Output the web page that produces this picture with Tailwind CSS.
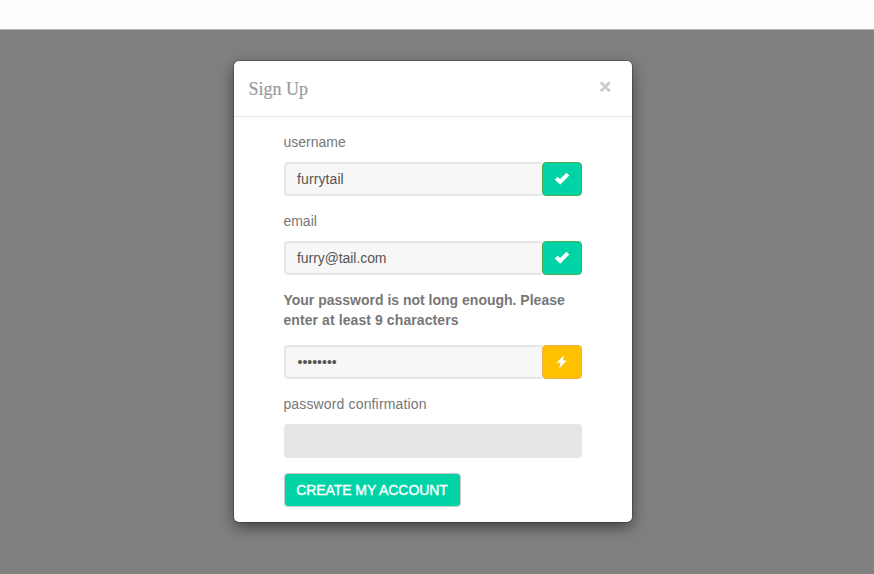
<!DOCTYPE html>
<html lang="en">
<head>
<meta charset="utf-8">
<title>Sign Up</title>
<script src="https://cdn.jsdelivr.net/npm/@tailwindcss/browser@4"></script>
</head>
<body class="h-[574px] overflow-hidden bg-[#808080] font-['Liberation_Sans',Arial,sans-serif] text-[14px] leading-5 text-[#777]">
<div class="h-[30px] border-b border-[#b8bbb9] bg-[#fefefe]"></div>
<main class="ml-[234px] mt-[31px] h-[461px] w-[398px] rounded-[5px] bg-white shadow-[0_0_0_1px_rgba(0,0,0,0.2),0_5px_15px_rgba(0,0,0,0.5)]">
  <header class="flex h-[56px] items-start justify-between border-b border-[#e5e5e5] pl-[14.5px] pr-[21px]">
    <h1 class="mt-[16px] whitespace-nowrap font-['Liberation_Serif',serif] text-[18px] leading-6 text-[#999] [-webkit-text-stroke:0.2px_#999]">Sign Up</h1>
    <button aria-label="Close" class="mt-[20px]"><svg class="block" width="12" height="12" viewBox="0 0 12 12" fill="none" stroke="#ccc" stroke-width="3"><path d="M1.7 1.3 10.7 10.3M10.7 1.3 1.7 10.3"/></svg></button>
  </header>
  <form class="ml-[50px] flex w-[298px] flex-col pt-[15px]">
    <label class="-ml-[0.6px] whitespace-nowrap">username</label>
    <div class="mt-[10px] flex h-[34px]">
      <div class="flex flex-1 items-center rounded-l-[4px] border-2 border-r-0 border-[#e6e6e6] bg-[#f7f7f7] pl-[11px] text-[#555]"><span class="tracking-[0.1px]">furrytail</span></div>
      <div class="flex w-[40px] items-center justify-center rounded-[4px] border border-[#4cae4c] bg-[#00d4a6]"><svg width="16" height="14" viewBox="0 0 16 14" fill="#fff"><path d="M.8 7.5 3.6 4.7 6.1 7.1 12.5.7 15.3 3.5 6.1 12.7Z"/></svg></div>
    </div>
    <label class="-ml-[0.6px] mt-[15px] whitespace-nowrap">email</label>
    <div class="mt-[10px] flex h-[34px]">
      <div class="flex flex-1 items-center rounded-l-[4px] border-2 border-r-0 border-[#e6e6e6] bg-[#f7f7f7] pl-[11px] text-[#555]"><span class="tracking-[-0.07px]">furry@tail.com</span></div>
      <div class="flex w-[40px] items-center justify-center rounded-[4px] border border-[#4cae4c] bg-[#00d4a6]"><svg width="16" height="14" viewBox="0 0 16 14" fill="#fff"><path d="M.8 7.5 3.6 4.7 6.1 7.1 12.5.7 15.3 3.5 6.1 12.7Z"/></svg></div>
    </div>
    <label class="-ml-[0.6px] mt-[15px] whitespace-nowrap font-bold">Your password is not long enough. Please<br><span class="tracking-[0.09px]">enter at least 9 characters</span></label>
    <div class="mt-[15px] flex h-[34px]">
      <div class="flex flex-1 items-center rounded-l-[4px] border-2 border-r-0 border-[#e6e6e6] bg-[#f7f7f7] pl-[11.5px] text-[#555]"><span>••••••••</span></div>
      <div class="flex w-[40px] items-center justify-center rounded-[4px] border border-[#f0ad4e] bg-[#ffc000]"><svg width="12" height="14" viewBox="0 0 12 14" fill="#fff"><path d="M8.2 0 .7 7.7 4.6 7.7 2.9 13.8 10.8 5.4 6.8 5.4Z"/></svg></div>
    </div>
    <label class="-ml-[0.6px] mt-[15px] whitespace-nowrap tracking-[0.15px]">password confirmation</label>
    <div class="mt-[10px] h-[34px] rounded-[4px] bg-[#e6e6e6]"></div>
    <button type="button" class="mt-[15px] flex h-[34px] w-[177px] items-center justify-center whitespace-nowrap rounded-[4px] border border-[#ccc] bg-[#00d4a6] text-white [-webkit-text-stroke:0.4px_white]"><span class="-ml-[1px] tracking-[-0.06px]">CREATE MY ACCOUNT</span></button>
  </form>
</main>
</body>
</html>
